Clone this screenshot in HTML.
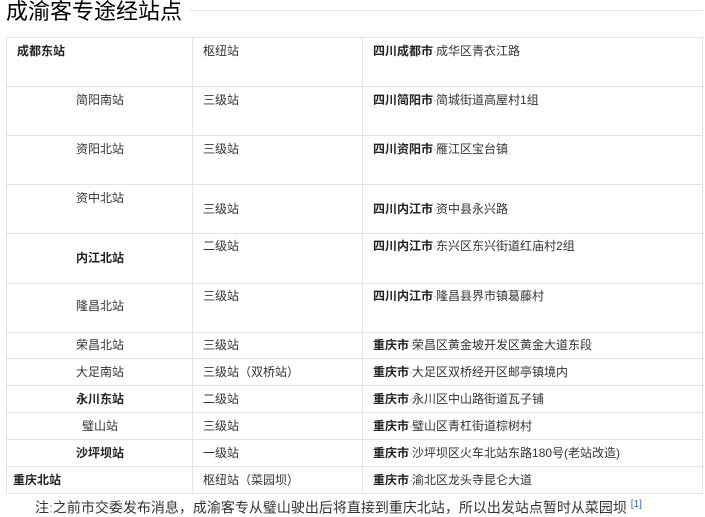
<!DOCTYPE html>
<html><head><meta charset="utf-8"><style>
body{margin:0;width:705px;height:513px;background:#fff;position:relative;overflow:hidden;font-family:"Liberation Sans","Noto Sans CJK SC",sans-serif;color:#333;font-size:12px}
.t{position:absolute;white-space:nowrap;line-height:14px}
.b{font-weight:bold;color:#222}
.h{position:absolute;height:1px;background:#e3e3e3;left:6px;width:697px}
.v{position:absolute;width:1px;background:#e3e3e3;top:37px;height:457px}
.d{color:#999;display:inline-block;width:3px;overflow:hidden;vertical-align:top}
</style></head><body>
<div class="t" style="left:6px;top:-1px;font-size:22px;line-height:26px;color:#000">成渝客专途经站点</div>
<div style="position:absolute;left:190px;top:10px;width:513px;height:1px;background:#e3e3e3"></div>
<div class="h" style="top:37px"></div><div class="h" style="top:86px"></div><div class="h" style="top:135px"></div><div class="h" style="top:184px"></div><div class="h" style="top:233px"></div><div class="h" style="top:283px"></div><div class="h" style="top:332px"></div><div class="h" style="top:358px"></div><div class="h" style="top:385px"></div><div class="h" style="top:412px"></div><div class="h" style="top:439px"></div><div class="h" style="top:466px"></div><div class="h" style="top:493px"></div>
<div class="v" style="left:6px"></div><div class="v" style="left:192px"></div><div class="v" style="left:362px"></div><div class="v" style="left:702px"></div>

<div class="t b" style="left:17px;top:44px">成都东站</div><div class="t" style="left:203px;top:44px">枢纽站</div><div class="t" style="left:373px;top:44px"><b class="b">四川成都市</b><span class="d">·</span>成华区青衣江路</div>
<div class="t" style="left:76px;top:93px">简阳南站</div><div class="t" style="left:203px;top:93px">三级站</div><div class="t" style="left:373px;top:93px"><b class="b">四川简阳市</b><span class="d">·</span>简城街道高屋村1组</div>
<div class="t" style="left:76px;top:142px">资阳北站</div><div class="t" style="left:203px;top:142px">三级站</div><div class="t" style="left:373px;top:142px"><b class="b">四川资阳市</b><span class="d">·</span>雁江区宝台镇</div>
<div class="t" style="left:76px;top:191px">资中北站</div><div class="t" style="left:203px;top:202px">三级站</div><div class="t" style="left:373px;top:202px"><b class="b">四川内江市</b><span class="d">·</span>资中县永兴路</div>
<div class="t b" style="left:76px;top:251px">内江北站</div><div class="t" style="left:203px;top:239px">二级站</div><div class="t" style="left:373px;top:239px"><b class="b">四川内江市</b><span class="d">·</span>东兴区东兴街道红庙村2组</div>
<div class="t" style="left:76px;top:299px">隆昌北站</div><div class="t" style="left:203px;top:289px">三级站</div><div class="t" style="left:373px;top:289px"><b class="b">四川内江市</b><span class="d">·</span>隆昌县界市镇葛藤村</div>
<div class="t" style="left:76px;top:338px">荣昌北站</div><div class="t" style="left:203px;top:338px">三级站</div><div class="t" style="left:373px;top:338px"><b class="b">重庆市</b><span class="d">·</span>荣昌区黄金坡开发区黄金大道东段</div>
<div class="t" style="left:76px;top:365px">大足南站</div><div class="t" style="left:203px;top:365px">三级站（双桥站）</div><div class="t" style="left:373px;top:365px"><b class="b">重庆市</b><span class="d">·</span>大足区双桥经开区邮亭镇境内</div>
<div class="t b" style="left:76px;top:392px">永川东站</div><div class="t" style="left:203px;top:392px">二级站</div><div class="t" style="left:373px;top:392px"><b class="b">重庆市</b><span class="d">·</span>永川区中山路街道瓦子铺</div>
<div class="t" style="left:82px;top:419px">璧山站</div><div class="t" style="left:203px;top:419px">三级站</div><div class="t" style="left:373px;top:419px"><b class="b">重庆市</b><span class="d">·</span>璧山区青杠街道棕树村</div>
<div class="t b" style="left:76px;top:446px">沙坪坝站</div><div class="t" style="left:203px;top:446px">一级站</div><div class="t" style="left:373px;top:446px"><b class="b">重庆市</b><span class="d">·</span>沙坪坝区火车北站东路180号(老站改造)</div>
<div class="t b" style="left:13px;top:473px">重庆北站</div><div class="t" style="left:203px;top:473px">枢纽站（菜园坝）</div><div class="t" style="left:373px;top:473px"><b class="b">重庆市</b><span class="d">·</span>渝北区龙头寺昆仑大道</div>

<div class="t" style="left:35px;top:496px;font-size:14px;line-height:17px">注<span style="color:#999">:</span>之前市交委发布消息，成渝客专从璧山驶出后将直接到重庆北站，所以出发站点暂时从菜园坝 <sup style="color:#3366cc;font-size:10px">[1]</sup></div>
</body></html>
